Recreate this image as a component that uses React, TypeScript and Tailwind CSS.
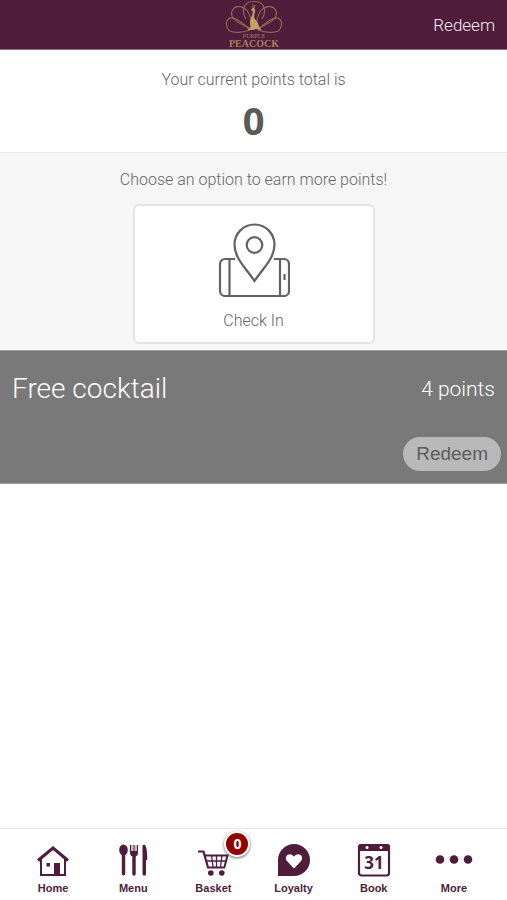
import React from 'react';

interface Tab {
  label: string;
  icon: React.ReactNode;
  badge?: number;
}

const PeacockLogo: React.FC = () => (
  <svg width="60" height="49" viewBox="0 0 60 49" role="img" aria-label="Purple Peacock">
    <g fill="none" stroke="#94694f" strokeWidth="1.200">
      <path d="M22 19C17 11 19 1.500 30 1.500S43 11 38 19" />
      <path d="M26 28C15 24 5 18 8 11c3-7 12-5 16 1 2 3 3 6 3.500 10" />
      <path d="M34 28c11-4 21-10 18-17-3-7-12-5-16 1-2 3-3 6-3.500 10" />
      <path d="M26 30C19 23 11 17 6 18c-6 3-4 13 3 14 6 1 12 0 17-2" />
      <path d="M34 30c7-7 15-13 20-12 6 3 4 13-3 14-6 1-12 0-17-2" />
    </g>
    <path
      d="M28 8.500c1-.8 2.500-.3 3 1 .7 2.500-1.300 5-.8 8 .5 2.500 3.800 4 4.300 7 .3 3 1.500 3.500 3 5.500-3-.3-5-1-7-.5-2 .5-4.500 1-7 .2 2-1 3.500-2 3-3.500-1-3-.5-6 .8-9 .8-2.500 1.700-4.500 1.200-7l-2 .5z"
      fill="#c3a063"
    />
    <path d="M29 8V4.500M30 8l1-3" stroke="#c3a063" strokeWidth=".7" />
    <text x="30" y="38" textAnchor="middle" fontSize="6" fill="#a87f5c" fontFamily="Liberation Serif, serif">
      PURPLE
    </text>
    <text x="30" y="47" textAnchor="middle" fontSize="10" fontWeight="700" fill="#a88058" fontFamily="Liberation Serif, serif">
      PEACOCK
    </text>
  </svg>
);

const CheckInIcon: React.FC = () => (
  <svg width="72" height="74" viewBox="0 0 72 74" fill="none" stroke="#626262" strokeWidth="2.2" aria-hidden="true">
    <path d="M17 36H7a5 5 0 0 0-5 5v27a5 5 0 0 0 5 5h59a5 5 0 0 0 5-5V41a5 5 0 0 0-5-5H56" />
    <path d="M11.500 36v37M62 36v37" />
    <path d="M66.500 51v6" />
    <path d="M36.500 58C27 44 16.500 35 16.500 21.500a20 20 0 0 1 40 0C56.500 35 46 44 36.500 58Z" />
    <circle cx="36.500" cy="22" r="7.800" />
  </svg>
);

const HomeIcon: React.FC = () => (
  <svg width="34" height="34" viewBox="0 0 34 34" fill="none" aria-hidden="true">
    <path d="M2 17.500 17 5l15 12.500" stroke="#4f1d3b" strokeWidth="3" />
    <path d="M5 16v16h24V16" stroke="#4f1d3b" strokeWidth="2" />
    <path d="M18 20h6v12h-6zM10.500 20h3.500v3.500h-3.500z" fill="#4f1d3b" />
  </svg>
);

const MenuIcon: React.FC = () => (
  <svg width="34" height="34" viewBox="0 0 34 34" fill="#4f1d3b" aria-hidden="true">
    <ellipse cx="7.500" cy="7" rx="4.300" ry="5.500" />
    <rect x="5.800" y="10" width="3.400" height="22.500" rx="1.700" />
    <path d="M14 2h1.300v6h1.400V2h2.600v6h1.400V2H22v8c0 2-1.200 3-2.300 3.500V31a1.700 1.700 0 0 1-3.400 0V13.500C15.200 13 14 12 14 10z" />
    <path d="M18 2v6" stroke="#fff" strokeWidth=".8" />
    <path d="M26.500 3c0-1 1.300-1.500 2.300-1.200C30.500 3 31.500 10 31.200 17H30v14a1.700 1.700 0 0 1-3.500 0z" />
  </svg>
);

const BasketIcon: React.FC = () => (
  <svg width="34" height="34" viewBox="0 0 34 34" fill="none" stroke="#4f1d3b" aria-hidden="true">
    <path d="M2 8.500h5.500l4.500 16h17" strokeWidth="2.200" />
    <path d="M8.500 12.500h23L28.500 24" strokeWidth="2" />
    <path d="M10 18h20M15.500 12l1.500 12M20.500 12v12M26 12l-1.500 12" strokeWidth="1.300" />
    <circle cx="14.800" cy="30" r="2.800" fill="#4f1d3b" stroke="none" />
    <circle cx="25.800" cy="30" r="2.800" fill="#4f1d3b" stroke="none" />
  </svg>
);

const LoyaltyIcon: React.FC = () => (
  <svg width="34" height="34" viewBox="0 0 34 34" aria-hidden="true">
    <path d="M1 33V17A16 16 0 1 1 17 33Z" fill="#4f1d3b" />
    <path d="M17 25.500 10.200 18.300C8.200 16 8.700 13.300 10.500 12c2.300-1.600 5-.8 6.500 1.700 1.500-2.500 4.200-3.300 6.500-1.700 1.800 1.300 2.300 4 .3 6.300z" fill="#fff" />
  </svg>
);

const BookIcon: React.FC = () => (
  <svg width="34" height="34" viewBox="0 0 34 34" aria-hidden="true">
    <rect x="2" y="2" width="30" height="30.500" rx="2.500" fill="#fff" stroke="#4f1d3b" strokeWidth="2.200" />
    <path d="M1 8V4a3 3 0 0 1 3-3h26a3 3 0 0 1 3 3v4z" fill="#4f1d3b" />
    <circle cx="10" cy="4.500" r="1.500" fill="#fff" />
    <circle cx="24" cy="4.500" r="1.500" fill="#fff" />
    <text x="17" y="26" textAnchor="middle" fontSize="17" fontWeight="700" fill="#4f1d3b" fontFamily="Open Sans, sans-serif">
      31
    </text>
  </svg>
);

const MoreIcon: React.FC = () => (
  <svg width="38" height="34" viewBox="0 0 38 34" fill="#4f1d3b" aria-hidden="true">
    <circle cx="5" cy="16.500" r="4.300" />
    <circle cx="19" cy="16.500" r="4.300" />
    <circle cx="33" cy="16.500" r="4.300" />
  </svg>
);

const tabs: Tab[] = [
  { label: 'Home', icon: <HomeIcon /> },
  { label: 'Menu', icon: <MenuIcon /> },
  { label: 'Basket', icon: <BasketIcon />, badge: 0 },
  { label: 'Loyalty', icon: <LoyaltyIcon /> },
  { label: 'Book', icon: <BookIcon /> },
  { label: 'More', icon: <MoreIcon /> },
];

const App: React.FC = () => {
  return (
    <div className="flex min-h-screen flex-col bg-white font-['Roboto',sans-serif] font-light text-[#666666]">
      <header className="grid grid-cols-[1fr_auto_1fr] items-center border-b border-[#8b6c7d] bg-[#4f1d3b]">
        <div />
        <PeacockLogo />
        <button type="button" className="justify-self-end px-3 text-[17px] leading-6 text-[#f3e9ef]">
          Redeem
        </button>
      </header>

      <main className="flex-1">
        <section className="flex flex-col items-center pt-[18px] pb-3 text-center">
          <p className="text-base leading-6">Your current points total is</p>
          <p className="mt-2 font-['Open_Sans',sans-serif] text-[38px] leading-10 font-bold text-[#5a5a5a]">0</p>
        </section>

        <section className="flex flex-col items-center border-t border-[#ebebeb] bg-[#f6f6f6] pt-[15px] pb-[6px] text-center">
          <p className="text-base leading-6">Choose an option to earn more points!</p>
          <button
            type="button"
            className="mt-3 flex w-[242px] flex-col items-center rounded-md border-2 border-[#e4e4e4] bg-white pt-[17px] pb-[9px]"
          >
            <CheckInIcon />
            <span className="mt-3 text-base leading-6">Check In</span>
          </button>
        </section>

        <section className="border-y border-[#a0a0a0] bg-[#797979] pt-[18px] pb-3 text-white">
          <div className="flex items-center justify-between px-3">
            <h2 className="text-[28px] leading-10">Free cocktail</h2>
            <span className="text-[21px] leading-10">4 points</span>
          </div>
          <div className="mt-7 flex justify-end px-[6px]">
            <button
              type="button"
              className="rounded-full bg-[#b9b9b9] px-[13px] py-[5px] font-['Liberation_Sans',sans-serif] text-[19px] leading-6 font-normal text-[#5c5c5c]"
            >
              Redeem
            </button>
          </div>
        </section>
      </main>

      <nav className="grid grid-cols-6 border-t border-[#e4e4e4] px-[13px] pt-[14px] pb-1">
        {tabs.map((tab) => (
          <a key={tab.label} href="#" className="flex flex-col items-center text-[#4f1d3b]">
            <span className="relative">
              {tab.icon}
              {tab.badge !== undefined && (
                <span className="absolute -top-3 -right-5 flex size-[26px] items-center justify-center rounded-full border-2 border-white bg-[#920000] font-['Open_Sans',sans-serif] text-sm font-bold text-white shadow-[0_1px_3px_rgba(0,0,0,0.6)]">
                  {tab.badge}
                </span>
              )}
            </span>
            <span className="mt-[3px] font-['Liberation_Sans',sans-serif] text-[11px] leading-4 font-bold">{tab.label}</span>
          </a>
        ))}
      </nav>
    </div>
  );
};

export default App;
